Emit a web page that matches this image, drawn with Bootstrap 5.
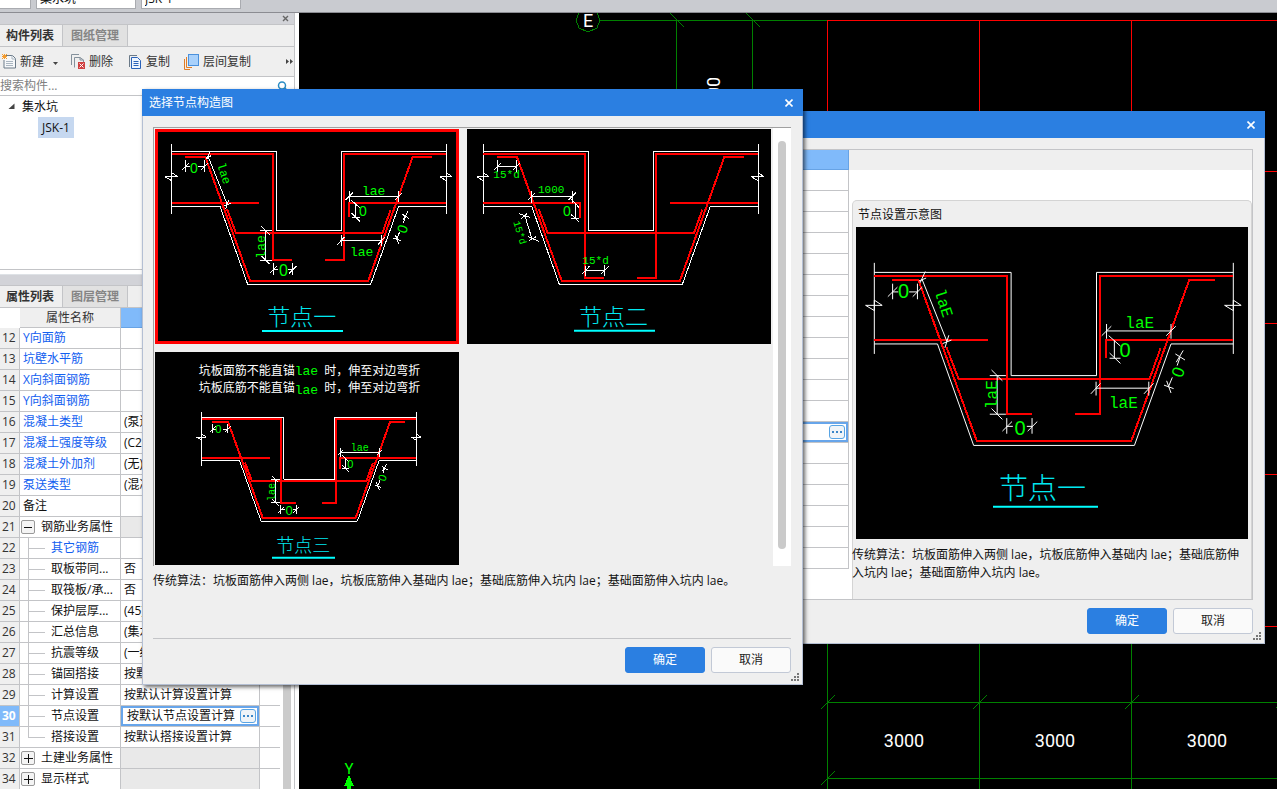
<!DOCTYPE html>
<html lang="zh-CN">
<head>
<meta charset="utf-8">
<meta name="viewport" content="width=device-width, initial-scale=1">
<title>选择节点构造图</title>
<link href="https://cdn.jsdelivr.net/npm/bootstrap@5.3.0/dist/css/bootstrap.min.css" rel="stylesheet">
<style>
:root{--ui-blue:#2b7fe1;--ui-bg:#efefef;--ui-line:#c3c4c7;--ui-strip:#d2d3d8}
body{font-family:"Open Sans","Noto Sans CJK SC",sans-serif;font-size:12px;line-height:18px;color:#111;background:#000}
button,input{font:inherit;color:inherit}
svg text{white-space:pre}
/* top bar */
.top-bar{height:13px;background:#c9cbd0;border-bottom:1px solid #8b8c92;padding-bottom:3px;gap:5px}
.top-bar input{height:22px;width:100px;border:1px solid #a9abb0;background:#fff;padding:0 3px;flex:none}
.top-bar input.short-box{width:31px;border-left:0}
.work-area{min-height:0}
/* left panel */
.side-panel{width:299px;background:#fff}
.side-inner{width:295px;border-right:1px solid var(--ui-line)}
.strip{height:12px;background:var(--ui-strip);border-bottom:1px solid var(--ui-line)}
.strip button{width:12px;height:11px;margin-right:3px}
.tab-row{height:22px;background:var(--ui-bg);border-bottom:1px solid var(--ui-line)}
.tab-row button{border:0;border-right:1px solid var(--ui-line);background:#e1e1e1;color:#858585;font-weight:700;padding:0 8px;line-height:21px}
.tab-row button.is-on{background:var(--ui-bg);color:#333;padding:0 8px 0 6px}
.tool-row{height:30px;background:var(--ui-bg);border-bottom:1px solid var(--ui-line);padding-left:2px}
.tool-row button{color:#333;gap:4px}
.tool-row .next-tool{margin-left:14px}
.tool-row .first-copy{margin-left:16px}
.search-row{height:19px;border-bottom:1px solid var(--ui-line);padding-right:6px}
.search-row input{padding:0}
.search-row input::placeholder{color:#808080;opacity:1}
.tree{height:174px;border-bottom:1px solid var(--ui-line)}
.tree-row{height:21px}
.tree .picked{background:#c6d8f0;padding:0 4px;line-height:21px;margin-left:38px}
.prop-wrap{background:#fff}
.prop-table{width:280px;table-layout:fixed;border-collapse:separate;border-spacing:0}
.prop-table td,.prop-table th{height:21px;padding:1px 3px 1px 3px;border-right:1px solid var(--ui-line);border-bottom:1px solid var(--ui-line);line-height:18px;white-space:nowrap;overflow:hidden;font-weight:400}
.prop-table th[scope=row]{background:var(--ui-bg);color:#333;padding-left:2px}
.prop-table thead th{height:20px;background:var(--ui-bg);text-align:center;color:#333;padding-bottom:0}
.prop-table thead th.is-hot{background:#80bafa;border-color:#67a3e5}
.prop-table thead th:first-child,.prop-table thead th:last-child{background:#fff;border-color:#fff}
.prop-table td:last-child,.prop-table th:last-child{border-right:0}
.prop-table .link-name{color:#1260f0}
.prop-table tr.is-group td:nth-child(3){background:#e9e9e9}
.prop-table tr.is-group td:nth-child(2){padding-left:1px}
.prop-table tr.is-current th{background:#80bafa;color:#fff;font-weight:700}
.prop-table tr.is-current td:nth-child(3){box-shadow:inset 0 0 0 2px #67a5ea;padding-left:6px}
.prop-table .has-branch{padding:0}
.branch{width:26px;height:21px;position:relative;display:block;flex:none;margin:0 5px 0 0}
.branch::before{content:"";position:absolute;left:8px;top:0;bottom:0;border-left:1px solid var(--ui-line)}
.branch::after{content:"";position:absolute;left:8px;top:10px;width:17px;border-top:1px solid var(--ui-line)}
.branch.is-last::before{bottom:10px}
.has-branch>div{height:20px}
.fold{width:14px;height:14px;border:1px solid #999;border-radius:2px;background:#f4f4f4;padding:0;flex:none;margin-right:6px}
.dots-btn{width:16px;height:14px;border:1px solid #58a4e4;border-radius:3px;background:#f0f4f8;padding:0;flex:none}
.bar-thumb{width:8px;background:#cbcbcb;margin-left:3px}
/* dialogs */
.win{position:absolute;background:var(--ui-bg);border:1px solid #b4bfd3;border-top:0;box-shadow:2px 2px 4px rgba(0,0,0,.6)}
.win-title{height:27px;background:var(--ui-blue);color:#fff;margin:0 -1px;padding:0 6px 0 7px}
.win-front{left:142px;top:89px;width:661px;height:596px;z-index:3}
.win-back{left:561px;top:111px;width:704px;height:533px;z-index:2;box-shadow:none}
.win-btn{width:80px;height:26px;border-radius:3px;font-size:12px;line-height:18px;padding:3px;border:1px solid #c2c9d6;background:#fafafa;color:#222}
.win-btn.is-main{background:var(--ui-blue);border-color:var(--ui-blue);color:#fff}
.btn-line{gap:6px}
.grip{position:absolute;right:3px;bottom:3px}
.front-body{padding:11px 11px 11px 10px}
.node-list{height:439px;border-top:1px solid #a0a0a0;border-left:1px solid #a0a0a0;overflow:hidden}
.node-grid{gap:8px;padding:1px 0 0 1px;width:619px}
.node-pic{width:304px;background:#000}
.node-pic.is-picked{outline:3px solid red;outline-offset:-3px}
.list-scroll{width:18px;background:#fff;padding:13px 5px 17px 5px}
.list-scroll div{width:8px;border-radius:4px;background:#cacaca}
.front-note{height:73px;border-bottom:1px solid var(--ui-line);padding-top:6px}
.back-body{padding:11px 11px 6px}
.back-frame{height:451px;border:1px solid var(--ui-line);background:#fff}
.back-grid{width:275px;table-layout:fixed;border-collapse:separate;border-spacing:0}
.back-grid td,.back-grid th{height:21px;padding:0 3px;border-right:1px solid var(--ui-line);border-bottom:1px solid var(--ui-line)}
.back-grid th{height:20px;background:#80bafa;border-color:#67a3e5}
.back-grid tr.is-current td{box-shadow:inset 0 0 0 2px #67a5ea}
.back-head{height:20px;background:var(--ui-bg)}
.pic-box{margin:30px 0 0 3px;background:var(--ui-bg);border:1px solid #d4d4d4;border-radius:5px 5px 0 0;border-bottom:0;padding:5px 3px 0}
.pic-name{height:21px;padding-left:2px}
.pic-note{margin:7px 0 0 -4px}
/* section drawings */
.ln{fill:none;stroke:#fff;stroke-width:1;vector-effect:non-scaling-stroke;shape-rendering:crispEdges}
.bar{fill:none;stroke:red;stroke-width:2;vector-effect:non-scaling-stroke;shape-rendering:crispEdges}
.cap-line{fill:none;stroke:#0ff;stroke-width:6}
.dim{fill:#0f0;font-family:"Liberation Mono","Noto Sans CJK SC",monospace}
.zero{fill:#0f0;font-family:"Liberation Sans",sans-serif}
.cap{fill:#00e8f0;font-family:"Noto Sans CJK SC",sans-serif;font-weight:300}
.cad-num{fill:#fff;font-family:Roboto,sans-serif}
.g{stroke:#008000;fill:none}.r{stroke:red;fill:none}
</style>
</head>
<body class="vh-100 overflow-hidden position-relative d-flex flex-column">

<svg width="0" height="0" class="position-absolute" aria-hidden="true">
  <defs>
    <g id="pit-base">
      <path class="ln" d="M95 168V378M919 168V378M95 190H409V428H605V190H919M95 355H240L323 589H692L776 355H919M75 266H113M75 266L95 278V254L113 266M899 266H937M899 266L919 278V254L937 266"/>
      <path class="bar" d="M136 207H196L330 578H685L818 207H876M261 363L288 435H727L752 365"/>
    </g>
    <g id="pit-anchor">
      <path class="bar" d="M95 198H399V517H456M919 198H612V517H555M95 345H357M919 345H627V387"/>
      <path class="ln" d="M137 216V252M194 216V252M126 246L148 224M183 246L205 224M137 235H150M175 235H194
       M628 325H776M628 309V343M776 309V343M617 336L639 314M765 336L787 314
       M646 347V388M635 388H660M633 336L660 360M635 376L660 400
       M377 428V517M360 428H397M360 517H397M364 415L389 440M364 504L389 529
       M399 545H413M445 545H457M399 526V562M457 526V562M389 556L411 534M447 556L469 534
       M797 385L790 405M779 432L770 454M786 378L808 392M788 397L804 370M760 450L782 458M766 440L776 468"/>
    </g>
    <g id="dim-slant"><path class="ln" d="M205 207L262 350M197 210L214 203M200 214L212 188M252 354L272 346M266 335L257 364"/></g>
    <g id="dim-low"><path class="ln" d="M604 457H725M604 442V474M725 442V474M592 470L614 446M714 470L736 446"/></g>
  </defs>
</svg>

<header class="top-bar d-flex align-items-end overflow-hidden flex-shrink-0">
  <input class="short-box" type="text" aria-label="楼层">
  <input type="text" value="集水坑" aria-label="构件类型">
  <input type="text" value="JSK-1" aria-label="构件">
</header>

<main class="work-area d-flex flex-grow-1">
  <aside class="side-panel flex-shrink-0 overflow-hidden">
    <div class="side-inner h-100 d-flex flex-column">
      <div class="strip d-flex justify-content-end flex-shrink-0">
        <button class="border-0 bg-transparent p-0 d-flex align-items-center justify-content-center" aria-label="关闭"><svg width="7" height="7" viewBox="0 0 7 7"><path d="M1 1L6 6M6 1L1 6" stroke="#666" stroke-width="1.4"/></svg></button>
      </div>
      <div class="tab-row d-flex flex-shrink-0"><button class="is-on">构件列表</button><button>图纸管理</button></div>
      <div class="tool-row d-flex align-items-center flex-shrink-0">
        <button class="border-0 bg-transparent p-0 d-flex align-items-center">
          <svg width="14" height="15" viewBox="0 0 14 15"><path d="M4 1.500H10.500L13.500 4.500V14H2V6" fill="#f6f8fa" stroke="#6b7a88"/><path d="M10 1.500V5H13.500M4 7.500H11M4 9.500H11M4 11.500H11" fill="none" stroke="#a9b5c0"/><path d="M0 0L5 5M5 0L0 5M2.500 0V5M0 2.500H5" stroke="#f59b2c"/></svg>新建
          <svg class="ms-1 mt-1" width="7" height="5" viewBox="0 0 7 5"><path d="M1 1H6L3.500 4Z" fill="#444"/></svg>
        </button>
        <button class="border-0 bg-transparent p-0 d-flex align-items-center ms-2 ps-1">
          <svg width="14" height="15" viewBox="0 0 14 15"><path d="M.5 11V.5H8M3.500 13.500V3.500H9L12.500 6V8" fill="none" stroke="#84919c"/><path d="M9 3.500V6H12.500" fill="none" stroke="#84919c"/><rect x="7" y="8" width="7" height="7" fill="#d04040"/><path d="M8.500 9.500L12.500 13.500M12.500 9.500L8.500 13.500" stroke="#fff"/></svg>删除
        </button>
        <button class="first-copy border-0 bg-transparent p-0 d-flex align-items-center">
          <svg width="13" height="14" viewBox="0 0 13 14"><path d="M.5 12V.5H8" fill="none" stroke="#6b7a88"/><path d="M2.500 2.500H8.500L11.500 5.500V13.500H2.500Z" fill="#eef5ff" stroke="#2a62b8"/><path d="M4.500 6.500H9.500M4.500 8.500H9.500M4.500 10.500H9.500" stroke="#2a62b8"/></svg>复制
        </button>
        <button class="next-tool border-0 bg-transparent p-0 d-flex align-items-center">
          <svg width="15" height="16" viewBox="0 0 15 16"><path d="M.5 5V15.500H6M2.500 3V13.500H8" fill="none" stroke="#e07c25"/><rect x="4.500" y=".5" width="10" height="11" fill="#a9d1fb" stroke="#4b91dc"/></svg>层间复制
        </button>
        <button class="border-0 bg-transparent p-0 ms-auto d-flex" aria-label="更多"><svg width="9" height="7" viewBox="0 0 9 7"><path d="M1 1L4 3.500L1 6ZM5 1L8 3.500L5 6Z" fill="#444"/></svg></button>
      </div>
      <div class="search-row d-flex align-items-center flex-shrink-0">
        <input class="border-0 flex-grow-1" type="text" placeholder="搜索构件..." aria-label="搜索构件">
        <svg width="11" height="11" viewBox="0 0 11 11"><circle cx="5" cy="4.500" r="3.500" fill="none" stroke="#2a8cc4" stroke-width="1.500"/><path d="M7.500 7L10.500 10" stroke="#2a8cc4" stroke-width="1.800"/></svg>
      </div>
      <div class="tree flex-shrink-0">
        <div class="tree-row d-flex align-items-center"><svg class="ms-2 me-1 pe-0" width="10" height="7" viewBox="0 0 10 7"><path d="M6.500 .5V6H.5Z" fill="#444"/></svg>集水坑</div>
        <div class="tree-row d-flex"><span class="picked">JSK-1</span></div>
      </div>
      <div class="strip flex-shrink-0 mt-1 border-top"></div>
      <div class="tab-row d-flex flex-shrink-0"><button class="is-on">属性列表</button><button>图层管理</button></div>
      <div class="prop-wrap d-flex flex-grow-1 overflow-hidden">
        <div class="flex-shrink-0">
        <table class="prop-table">
          <colgroup><col style="width:20px"><col style="width:101px"><col style="width:139px"><col style="width:20px"></colgroup>
          <thead><tr><th></th><th scope="col">属性名称</th><th scope="col" class="is-hot"></th><th></th></tr></thead>
          <tbody>
          <tr><th scope="row">12</th><td class="link-name">Y向面筋</td><td></td><td></td></tr>
          <tr><th scope="row">13</th><td class="link-name">坑壁水平筋</td><td></td><td></td></tr>
          <tr><th scope="row">14</th><td class="link-name">X向斜面钢筋</td><td></td><td></td></tr>
          <tr><th scope="row">15</th><td class="link-name">Y向斜面钢筋</td><td></td><td></td></tr>
          <tr><th scope="row">16</th><td class="link-name">混凝土类型</td><td>(泵送混凝土)</td><td></td></tr>
          <tr><th scope="row">17</th><td class="link-name">混凝土强度等级</td><td>(C25)</td><td></td></tr>
          <tr><th scope="row">18</th><td class="link-name">混凝土外加剂</td><td>(无)</td><td></td></tr>
          <tr><th scope="row">19</th><td class="link-name">泵送类型</td><td>(混凝土泵)</td><td></td></tr>
          <tr><th scope="row">20</th><td>备注</td><td></td><td></td></tr>
          <tr class="is-group"><th scope="row">21</th><td><div class="d-flex align-items-center"><button class="fold d-flex align-items-center justify-content-center" aria-label="折叠"><svg width="8" height="8"><path d="M0 4.500H8" stroke="#111"/></svg></button>钢筋业务属性</div></td><td></td><td></td></tr>
          <tr><th scope="row">22</th><td class="has-branch link-name"><div class="d-flex align-items-center"><i class="branch"></i>其它钢筋</div></td><td></td><td></td></tr>
          <tr><th scope="row">23</th><td class="has-branch"><div class="d-flex align-items-center"><i class="branch"></i>取板带同...</div></td><td>否</td><td></td></tr>
          <tr><th scope="row">24</th><td class="has-branch"><div class="d-flex align-items-center"><i class="branch"></i>取筏板/承...</div></td><td>否</td><td></td></tr>
          <tr><th scope="row">25</th><td class="has-branch"><div class="d-flex align-items-center"><i class="branch"></i>保护层厚...</div></td><td>(45)</td><td></td></tr>
          <tr><th scope="row">26</th><td class="has-branch"><div class="d-flex align-items-center"><i class="branch"></i>汇总信息</div></td><td>(集水坑)</td><td></td></tr>
          <tr><th scope="row">27</th><td class="has-branch"><div class="d-flex align-items-center"><i class="branch"></i>抗震等级</div></td><td>(一级抗震)</td><td></td></tr>
          <tr><th scope="row">28</th><td class="has-branch"><div class="d-flex align-items-center"><i class="branch"></i>锚固搭接</div></td><td>按默认锚固搭接计算</td><td></td></tr>
          <tr><th scope="row">29</th><td class="has-branch"><div class="d-flex align-items-center"><i class="branch"></i>计算设置</div></td><td>按默认计算设置计算</td><td></td></tr>
          <tr class="is-current"><th scope="row">30</th><td class="has-branch"><div class="d-flex align-items-center"><i class="branch"></i>节点设置</div></td><td><div class="d-flex align-items-center justify-content-between">按默认节点设置计算<button class="dots-btn d-flex align-items-center justify-content-center" aria-label="选择节点构造"><svg width="10" height="2"><path d="M0 1H2M4 1H6M8 1H10" stroke="#3b86c8" stroke-width="2"/></svg></button></div></td><td></td></tr>
          <tr><th scope="row">31</th><td class="has-branch"><div class="d-flex align-items-center"><i class="branch is-last"></i>搭接设置</div></td><td>按默认搭接设置计算</td><td></td></tr>
          <tr class="is-group"><th scope="row">32</th><td><div class="d-flex align-items-center"><button class="fold d-flex align-items-center justify-content-center" aria-label="展开"><svg width="9" height="9"><path d="M0 4.500H9M4.500 0V9" stroke="#111"/></svg></button>土建业务属性</div></td><td></td><td></td></tr>
          <tr class="is-group"><th scope="row">34</th><td><div class="d-flex align-items-center"><button class="fold d-flex align-items-center justify-content-center" aria-label="展开"><svg width="9" height="9"><path d="M0 4.500H9M4.500 0V9" stroke="#111"/></svg></button>显示样式</div></td><td></td><td></td></tr>
          </tbody>
        </table>
        </div>
        <div class="bar-thumb"></div>
      </div>
    </div>
  </aside>

  <section class="flex-grow-1">
    <svg class="d-block w-100 h-100 overflow-visible" viewBox="299 13 978 776" preserveAspectRatio="xMinYMin slice" shape-rendering="crispEdges" role="img" aria-label="轴网平面">
      <path class="g" d="M600 20.500H827M676.500 20V120M752.500 20V120M670 13L684 27M746 13L760 27M579 13L576 20L579 28L588 32L597 28L600 20L597 13"/>
      <path class="r" d="M827 20.500H1277M827.500 20V120M979.500 20V120M1131.500 20V120M1260 171.500H1277M1260 323.500H1277M1260 474.500H1277M1260 626.500H1277"/>
      <path class="g" d="M827.500 640V789M979.500 640V789M1131.500 640V789M827 702.500H1277M827 778.500H1277M821 709L835 695M973 709L987 695M1125 709L1139 695M821 785L835 771M1276 708L1277 707"/>
      <g class="cad-num" font-size="18" text-anchor="middle"><text x="588" y="27">E</text>
      <text x="904" y="747">3000</text><text x="1055" y="747">3000</text><text x="1207" y="747">3000</text>
      <text transform="translate(720 97) rotate(-90)">3000</text></g>
      <text x="349" y="774" font-size="15" text-anchor="middle" fill="#0f0" font-family="Roboto,sans-serif">Y</text>
      <path d="M349 775L354 786H351V789H347V786H344Z" fill="#0f0"/>
    </svg>
  </section>
</main>

<section class="win win-back d-flex flex-column" role="dialog" aria-label="节点设置">
  <div class="win-title d-flex align-items-center justify-content-end flex-shrink-0"><button class="border-0 bg-transparent p-1 d-flex" aria-label="关闭"><svg width="8" height="8" viewBox="0 0 8 8"><path d="M.5 .5L7.500 7.500M7.500 .5L.5 7.500" stroke="#fff" stroke-width="1.600"/></svg></button></div>
  <div class="back-body flex-grow-1">
    <div class="back-frame d-flex">
      <div class="flex-shrink-0"><table class="back-grid"><thead><tr><th></th></tr></thead><tbody id="backRows"></tbody></table></div>
      <div class="flex-grow-1 d-flex flex-column">
        <div class="back-head"></div>
        <div class="pic-box flex-grow-1">
          <div class="pic-name">节点设置示意图</div>
          <svg class="d-block" width="392" height="312" viewBox="48 51 1176 936" role="img" aria-label="节点一">
            <rect x="48" y="51" width="1176" height="936"/>
            <g transform="translate(-21.200 -60) scale(1.307 1.301)"><use href="#pit-base"/><use href="#pit-anchor"/><use href="#dim-slant"/><use href="#dim-low"/></g>
            <g class="zero" font-size="60" text-anchor="middle"><text x="191" y="265">0</text><text x="855" y="440">0</text><text x="540" y="676">0</text><text transform="translate(1031 492) rotate(-70)" font-size="51">0</text></g>
            <g class="dim" font-size="48"><text x="856" y="354">laE</text><text x="807" y="594">laE</text><text transform="translate(470 597) rotate(-90)">laE</text><text transform="translate(283 243) rotate(72)">laE</text></g>
            <text class="cap" font-size="87" x="477" y="866">节点一</text><path class="cap-line" d="M459 890H774"/>
          </svg>
          <p class="pic-note">传统算法：坑板面筋伸入两侧 lae，坑板底筋伸入基础内 lae；基础底筋伸入坑内 lae；基础面筋伸入坑内 lae。</p>
        </div>
      </div>
    </div>
    <div class="btn-line d-flex justify-content-end mt-1 pt-1"><button class="win-btn is-main">确定</button><button class="win-btn">取消</button></div>
  </div>
  <svg class="grip" width="8" height="8" fill="#777"><path d="M6 0h2v2h-2zM3 3h2v2h-2zM6 3h2v2h-2zM0 6h2v2h-2zM3 6h2v2h-2zM6 6h2v2h-2z"/></svg>
</section>

<section class="win win-front d-flex flex-column" role="dialog" aria-label="选择节点构造图">
  <div class="win-title d-flex align-items-center justify-content-between flex-shrink-0"><span>选择节点构造图</span><button class="border-0 bg-transparent p-1 d-flex" aria-label="关闭"><svg width="8" height="8" viewBox="0 0 8 8"><path d="M.5 .5L7.500 7.500M7.500 .5L.5 7.500" stroke="#fff" stroke-width="1.600"/></svg></button></div>
  <div class="front-body flex-grow-1">
    <div class="node-list d-flex justify-content-between">
      <div class="node-grid d-flex flex-wrap align-content-start">
        <svg class="node-pic is-picked" height="215" viewBox="45 123 912 645" role="img" aria-label="节点一">
          <use href="#pit-base"/><use href="#pit-anchor"/><use href="#dim-slant"/><use href="#dim-low"/>
          <g class="zero" font-size="42" text-anchor="middle"><text x="162" y="254">0</text><text x="669" y="384">0</text><text x="430" y="563" font-size="48">0</text><text transform="translate(801 428) rotate(-70)">0</text></g>
          <g class="dim" font-size="39"><text x="666" y="321">lae</text><text x="630" y="505">lae</text><text transform="translate(376 512) rotate(-90)">lae</text><text transform="translate(231 229) rotate(72)" font-size="36">lae</text></g>
          <text class="cap" font-size="69" x="382" y="711">节点一</text><path class="cap-line" d="M366 729H609"/>
        </svg>
        <svg class="node-pic" height="215" viewBox="21 27 912 645" role="img" aria-label="节点二">
          <use href="#pit-base" transform="translate(-25 -96)"/>
          <path class="bar" d="M70 102H375V474H432M895 102H588V474H531M70 249H360V293M895 249H630"/>
          <path class="ln" d="M113 121V157M170 121V157M113 139H170M102 150L124 128M159 150L181 128M215 229H336M215 213V249M336 213V249M204 240L226 218M325 240L347 218M345 249V295M332 295H357M334 238L357 262M334 284L357 306M375 452H433M375 437V468M433 434V468M366 463L388 439M422 463L446 439M195 288L216 357M176 281L209 292M182 298L202 280M204 350L236 364M206 363L228 350"/>
          <g class="dim" font-size="33"><text x="100" y="174">15*d</text><text x="234" y="219">1000</text><text x="367" y="432">15*d</text><text transform="translate(160 306) rotate(73)" font-size="30">15*d</text></g>
          <text class="zero" x="321" y="288" font-size="42" text-anchor="middle">0</text>
          <text class="cap" font-size="69" x="357" y="614">节点二</text><path class="cap-line" d="M342 632H585"/>
        </svg>
        <svg class="node-pic" height="213" viewBox="45 21 912 639" role="img" aria-label="节点三">
          <g transform="translate(110.700 68.400) scale(.782)"><use href="#pit-base"/><use href="#pit-anchor"/></g>
          <g fill="#fff" font-size="36" font-family="'Noto Sans CJK SC',sans-serif"><text x="176" y="89">坑板面筋不能直锚</text><text x="553" y="89">时，伸至对边弯折</text><text x="176" y="141">坑板底筋不能直锚</text><text x="553" y="141">时，伸至对边弯折</text></g>
          <g class="dim" font-size="39"><text x="464" y="90">lae</text><text x="464" y="147">lae</text><text x="632" y="317" font-size="30">lae</text><text transform="translate(404 468) rotate(-90)" font-size="30">lae</text></g>
          <g class="zero" font-size="33" text-anchor="middle"><text x="235" y="263">0</text><text x="631" y="368">0</text><text x="447" y="510" font-size="39">0</text><text transform="translate(738 402) rotate(-70)">0</text></g>
          <text class="cap" font-size="54" x="409" y="621">节点三</text><path class="cap-line" d="M396 638H585"/>
        </svg>
      </div>
      <div class="list-scroll d-flex"><div></div></div>
    </div>
    <div class="front-note">传统算法：坑板面筋伸入两侧 lae，坑板底筋伸入基础内 lae；基础底筋伸入坑内 lae；基础面筋伸入坑内 lae。</div>
    <div class="btn-line d-flex justify-content-end pt-2"><button class="win-btn is-main">确定</button><button class="win-btn">取消</button></div>
  </div>
  <svg class="grip" width="8" height="8" fill="#777"><path d="M6 0h2v2h-2zM3 3h2v2h-2zM6 3h2v2h-2zM0 6h2v2h-2zM3 6h2v2h-2zM6 6h2v2h-2z"/></svg>
</section>

<script>
/* empty setting rows; the thirteenth one is being edited */
const dots='<div class="d-flex justify-content-end"><button class="dots-btn d-flex align-items-center justify-content-center" aria-label="选择节点构造"><svg width="10" height="2"><path d="M0 1H2M4 1H6M8 1H10" stroke="#3b86c8" stroke-width="2"/></svg></button></div>';
document.getElementById('backRows').innerHTML=Array.from({length:19},(_,i)=>i===12?'<tr class="is-current"><td>'+dots+'</td></tr>':'<tr><td></td></tr>').join('');
</script>
<script src="https://cdn.jsdelivr.net/npm/bootstrap@5.3.0/dist/js/bootstrap.bundle.min.js"></script>
</body>
</html>
